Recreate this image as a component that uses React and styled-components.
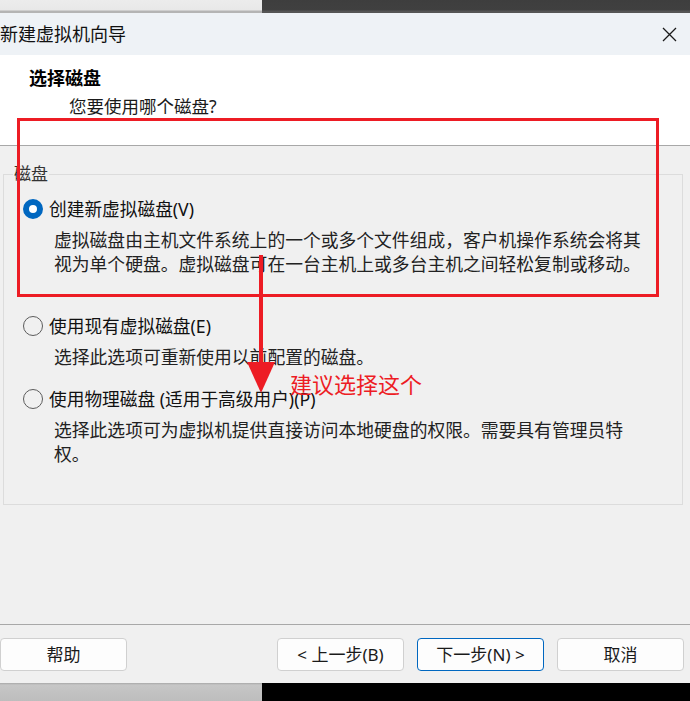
import styled, { createGlobalStyle } from "styled-components";

const GlobalStyle = createGlobalStyle`
  *, *::before, *::after {
    box-sizing: border-box;
  }
  html, body {
    margin: 0;
    padding: 0;
    background: #f0f0f0;
  }
  body {
    font-family: "Noto Sans", "Noto Sans CJK SC", sans-serif;
    color: #1a1a1a;
  }
`;

const options = [
  {
    label: "创建新虚拟磁盘(V)",
    checked: true,
    gap: 13,
    lines: [
      "虚拟磁盘由主机文件系统上的一个或多个文件组成，客户机操作系统会将其",
      "视为单个硬盘。虚拟磁盘可在一台主机上或多台主机之间轻松复制或移动。",
    ],
  },
  {
    label: "使用现有虚拟磁盘(E)",
    gap: 38,
    lines: ["选择此选项可重新使用以前配置的磁盘。"],
  },
  {
    label: "使用物理磁盘 (适用于高级用户)(P)",
    gap: 18,
    lines: [
      "选择此选项可为虚拟机提供直接访问本地硬盘的权限。需要具有管理员特",
      "权。",
    ],
  },
];

export default function App() {
  return (
    <Page>
      <GlobalStyle />
      <Strip $top>
        <StripLeft $top />
        <StripRight $top />
      </Strip>

      <TitleBar>
        <Title>新建虚拟机向导</Title>
        <Close>
          <svg width="15" height="15" viewBox="0 0 15 15">
            <path d="M1 1 L14 14 M14 1 L1 14" stroke="#1a1a1a" strokeWidth="1.3" fill="none" />
          </svg>
        </Close>
      </TitleBar>

      <Header>
        <HeaderTitle>选择磁盘</HeaderTitle>
        <HeaderSub>您要使用哪个磁盘?</HeaderSub>
      </Header>

      <Body>
        <Group>
          <Legend>磁盘</Legend>
          <Options>
            {options.map((o) => (
              <Option key={o.label} $gap={o.gap}>
                <RadioRow>
                  <Radio $checked={o.checked} />
                  <RadioLabel>{o.label}</RadioLabel>
                </RadioRow>
                <Desc>
                  {o.lines.map((l) => (
                    <Line key={l}>{l}</Line>
                  ))}
                </Desc>
              </Option>
            ))}
          </Options>
        </Group>
      </Body>

      <Footer>
        <Button>帮助</Button>
        <ButtonGroup>
          <Button>&lt; 上一步(B)</Button>
          <Button $primary>下一步(N) &gt;</Button>
          <Button>取消</Button>
        </ButtonGroup>
      </Footer>

      <Strip>
        <StripLeft />
        <StripRight />
      </Strip>

      <Highlight />
      <Arrow width="690" height="701" viewBox="0 0 690 701">
        <rect x="259" y="255" width="4" height="112" fill="#ed1c24" />
        <polygon points="247,362 275,362 261,393" fill="#ed1c24" />
      </Arrow>
      <Note>建议选择这个</Note>
    </Page>
  );
}

const Page = styled.div`
  position: relative;
  width: 690px;
  height: 701px;
  overflow: hidden;
  display: flex;
  flex-direction: column;
  background: #f0f0f0;
`;

const Strip = styled.div`
  display: flex;
  height: ${(p) => (p.$top ? "13px" : "18px")};
  flex-shrink: 0;
`;

const StripLeft = styled.div`
  width: 262px;
  background: ${(p) =>
    p.$top
      ? "linear-gradient(to bottom, #ececec 0, #e8e8e8 10px, #b4b4b4 11px, #b4b4b4 13px)"
      : "linear-gradient(to bottom, #a8a8a8 0, #c6c6c6 2px, #bdbdbd 18px)"};
`;

const StripRight = styled.div`
  flex: 1;
  background: ${(p) =>
    p.$top
      ? "linear-gradient(to bottom, #3e3e3e 0, #404040 10px, #555 11px, #555 13px)"
      : "#000"};
`;

const TitleBar = styled.div`
  height: 42px;
  flex-shrink: 0;
  background: #eef2f6;
  display: flex;
  align-items: center;
  justify-content: space-between;
  padding-right: 13px;
`;

const Title = styled.div`
  font-size: 18px;
  line-height: 24px;
  color: #111;
`;

const Close = styled.div`
  display: flex;
  margin-top: 1px;
`;

const Header = styled.div`
  height: 91px;
  flex-shrink: 0;
  background: #fff;
  border-bottom: 1px solid #a8a8a8;
  padding: 11px 0 0 29px;
`;

const HeaderTitle = styled.div`
  font-size: 18px;
  font-weight: 700;
  line-height: 24px;
  color: #000;
`;

const HeaderSub = styled.div`
  margin: 4px 0 0 40px;
  font-size: 17.5px;
  line-height: 24px;
  color: #1a1a1a;
`;

const Body = styled.div`
  flex: 1;
  padding: 18px 7px 0 3px;
`;

const Group = styled.fieldset`
  margin: 0;
  padding: 0 0 38px 9px;
  border: 1px solid #dcdcdc;
  min-width: 0;
`;

const Legend = styled.legend`
  padding: 0 1px;
  font-size: 17px;
  line-height: 20px;
  color: #333;
`;

const Options = styled.div`
  padding-left: 10px;
`;

const Option = styled.div`
  margin-top: ${(p) => p.$gap}px;
`;

const RadioRow = styled.div`
  display: flex;
  align-items: center;
  height: 24px;
  gap: 6px;
`;

const Radio = styled.span`
  width: 20px;
  height: 20px;
  border-radius: 50%;
  flex-shrink: 0;
  border: ${(p) => (p.$checked ? "6px solid #0067c0" : "1px solid #5c5c5c")};
  background: ${(p) => (p.$checked ? "#fff" : "transparent")};
`;

const RadioLabel = styled.span`
  font-size: 17.7px;
  line-height: 24px;
  white-space: nowrap;
  color: #111;
`;

const Desc = styled.div`
  margin-top: 7px;
  padding-left: 31px;
`;

const Line = styled.div`
  font-size: 17.8px;
  line-height: 24px;
  white-space: nowrap;
  color: #222;
`;

const Footer = styled.div`
  height: 59px;
  flex-shrink: 0;
  border-top: 1px solid #a8a8a8;
  display: flex;
  align-items: flex-start;
  justify-content: space-between;
  padding: 13px 6px 0 0;
`;

const ButtonGroup = styled.div`
  display: flex;
  gap: 13px;
`;

const Button = styled.button`
  width: 127px;
  height: 33px;
  border: 1px solid ${(p) => (p.$primary ? "#0067c0" : "#d0d0d0")};
  border-radius: 4px;
  background: #fdfdfd;
  font-family: "Noto Sans", "Noto Sans CJK SC", sans-serif;
  font-size: 17px;
  line-height: 20px;
  color: #1a1a1a;
  padding: 0;
  white-space: nowrap;
`;

const Highlight = styled.div`
  position: absolute;
  left: 17px;
  top: 118px;
  width: 642px;
  height: 179px;
  border: 3px solid #ed1c24;
  pointer-events: none;
`;

const Arrow = styled.svg`
  position: absolute;
  left: 0;
  top: 0;
  pointer-events: none;
`;

const Note = styled.div`
  position: absolute;
  left: 290px;
  top: 369px;
  font-family: "Noto Sans CJK SC", sans-serif;
  font-size: 22px;
  line-height: 28px;
  color: #ed1c24;
  white-space: nowrap;
`;
